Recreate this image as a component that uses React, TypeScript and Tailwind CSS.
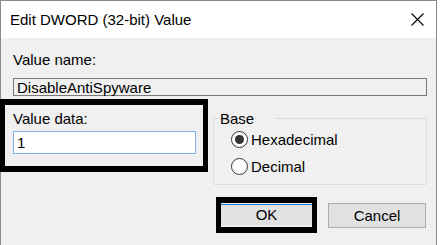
import React, { useState } from 'react';

const font = { fontFamily: '"Liberation Sans", Arial, sans-serif' };

const Radio = ({ checked, label, onSelect }: { checked: boolean; label: string; onSelect: () => void }) => (
  <label className="flex items-center gap-[3px] cursor-default" onClick={onSelect}>
    <span className="w-[17px] h-[17px] rounded-full border border-[#333] bg-white flex items-center justify-center">
      {checked && <span className="w-[9px] h-[9px] rounded-full bg-[#333]" />}
    </span>
    <span className="text-[15px] leading-[17px] text-black">{label}</span>
  </label>
);

const App = () => {
  const [base, setBase] = useState<'hex' | 'dec'>('hex');
  const [value, setValue] = useState('1');

  return (
    <div className="w-[440px] h-[245px] bg-white" style={font}>
      <div className="w-[437px] h-[245px] border-l border-t border-r border-[#8a8a8a] flex flex-col">
        {/* title bar */}
        <div className="h-[37px] bg-white flex items-center justify-between pl-[9px] pr-[12px]">
          <span className="text-[15px] leading-[17px] text-black">Edit DWORD (32-bit) Value</span>
          <svg width="13" height="13" viewBox="0 0 13 13" className="text-black">
            <path d="M0.5 0.5 L12.5 12.5 M12.5 0.5 L0.5 12.5" stroke="currentColor" strokeWidth="1.1" fill="none" />
          </svg>
        </div>

        {/* body */}
        <div className="flex-1 bg-[#f0f0f0] flex flex-col">
          <div className="pt-[13px] pl-[12px] pr-[9px]">
            <div className="text-[15px] leading-[17px] text-black">Value name:</div>
            <div className="mt-[10px] h-[18px] border border-[#7a7a7a] bg-[#f0f0f0] flex items-center pl-[3px] text-[15px] leading-[17px] text-black">
              DisableAntiSpyware
            </div>
          </div>

          <div className="flex items-start mt-[3px]">
            <div className="-ml-px w-[208px] border-black border-x-[5px] border-y-[6px] pt-[5px] pl-[8px] pr-[7px] pb-[11px]">
              <div className="text-[15px] leading-[17px] text-black">Value data:</div>
              <input
                value={value}
                onChange={(e) => setValue(e.target.value)}
                className="mt-[4px] w-full h-[23px] border border-[#7eb4ea] bg-white pl-[3px] text-[15px] text-black outline-none"
                style={font}
              />
            </div>

            <fieldset className="ml-[5px] mt-[11px] w-[214px] h-[75px] border border-[#dcdcdc] rounded-[2px] pl-[17px]">
              <legend className="ml-[2px] px-[4px] -translate-x-[17px] text-[15px] leading-[17px] text-black">Base</legend>
              <div className="flex flex-col gap-[10px] mt-[4px]">
                <Radio checked={base === 'hex'} label="Hexadecimal" onSelect={() => setBase('hex')} />
                <Radio checked={base === 'dec'} label="Decimal" onSelect={() => setBase('dec')} />
              </div>
            </fieldset>
          </div>

          <div className="flex items-center justify-end gap-[11px] pr-[10px] mt-[12px]">
            <div className="w-[101px] border-black border-x-[5px] border-y-[6px]">
              <button className="w-full h-[21px] bg-[#e1e1e1] border-t border-[#0078d7] text-[15px] leading-[17px] text-black" style={font}>
                OK
              </button>
            </div>
            <button className="w-[98px] h-[25px] bg-[#e1e1e1] border border-[#adadad] text-[15px] leading-[17px] text-black" style={font}>
              Cancel
            </button>
          </div>
        </div>
      </div>
    </div>
  );
};

export default App;
